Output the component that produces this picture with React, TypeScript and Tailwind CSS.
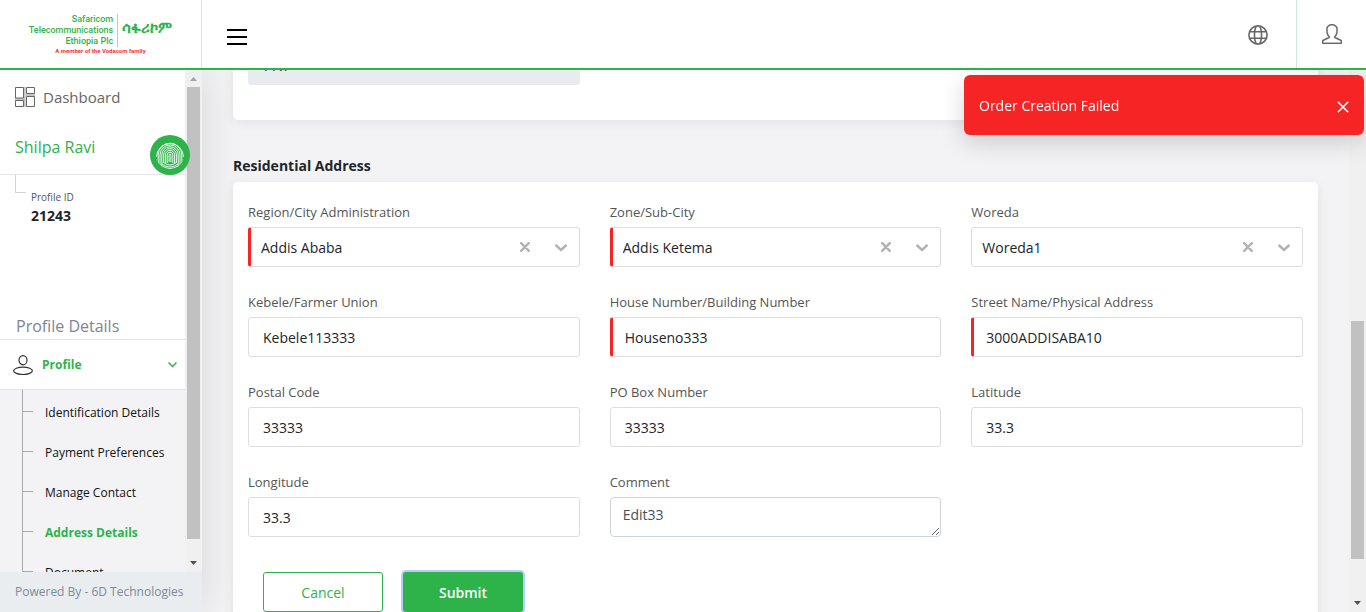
import { useState, type ReactNode } from "react";
import { SlUser } from "react-icons/sl";

const cx = (...parts: (string | false | undefined)[]) => parts.filter(Boolean).join(" ");

function Logo() {
  return (
    <a href="#home" className="flex flex-col items-center font-[Roboto,'Liberation_Sans',sans-serif] text-[#2db34a]">
      <span className="flex items-center gap-1">
        <span className="border-r border-[#a5dcb2] pr-1 text-right text-[9px] leading-[11px] font-medium">
          Safaricom
          <br />
          Telecommunications
          <br />
          Ethiopia Plc
        </span>
        <span className="pb-1 text-[15px] leading-4 font-bold">ሳፋሪኮም</span>
      </span>
      <span className="text-[6px] leading-[8px] font-bold text-[#f0323c]">A member of the Vodacom family</span>
    </a>
  );
}

function GlobeIcon() {
  return (
    <svg viewBox="0 0 20 20" className="size-5" fill="none" stroke="#666" strokeWidth="1.600">
      <circle cx="10" cy="10" r="9.1" />
      <path d="M8.500 1C5.800 5 5.800 15 8.500 19M11.500 1c2.700 4 2.700 14 0 18M1.500 6.800h17M1.500 13.200h17" />
    </svg>
  );
}

function DashboardIcon() {
  return (
    <svg viewBox="0 0 20 20" className="size-5" fill="none" stroke="#666">
      <path d="M9.500 0v20M11 8h9M0 12.200h10" stroke="#c4c4c4" strokeWidth="2.500" />
      <path d="M.5 .5h8v10.500h-8zM11.500 .5h8v6h-8zM.5 13.500h8v6h-8zM11.500 9.500h8v10h-8z" fill="#fff" />
    </svg>
  );
}

function PersonIcon() {
  return (
    <svg viewBox="0 0 20 20" className="size-5" fill="none" stroke="#333" strokeWidth="1.200">
      <ellipse cx="10" cy="5.200" rx="4" ry="4.600" />
      <ellipse cx="10" cy="15.800" rx="9.400" ry="3.700" />
    </svg>
  );
}

function Fingerprint() {
  return (
    <svg viewBox="0 0 40 40" className="size-10" fill="none" stroke="#fff" strokeWidth="0.9">
      <circle cx="20" cy="20" r="20" fill="#2db34a" stroke="none" />
      <clipPath id="print">
        <circle cx="20" cy="20" r="14" />
      </clipPath>
      <g clipPath="url(#print)">
        <path d="M6.500 22a13.500 13.500 0 0 1 27 0M8.200 29V20a11.800 11.800 0 0 1 23.600 0v9M10 32V20a10 10 0 0 1 20 0v12M11.800 33V20a8.200 8.200 0 0 1 16.400 0v13M13.600 27V20a6.400 6.400 0 0 1 12.800 0v7M15.400 28v-8a4.600 4.600 0 0 1 9.200 0v8M17.200 28v-8a2.800 2.800 0 0 1 5.600 0v8M19.100 27v-7a.9.9 0 0 1 1.800 0v7" />
        <path d="M13 27q7 6 14 0M12 29q8 6 16 0M12 31q8 5 16 0M6 24q1 4 3 6M34 24q-1 4-3 6" />
      </g>
    </svg>
  );
}

function Scrollbar({ thumb, up, className }: { thumb: string; up?: boolean; className?: string }) {
  return (
    <div aria-hidden="true" className={cx("flex w-[17px] shrink-0 flex-col items-center bg-[#f0f0f0]", className)}>
      {up && (
        <svg viewBox="0 0 17 17" className="size-[17px]" fill="#a3a3a3">
          <path d="M5 11h7L8.500 7z" />
        </svg>
      )}
      <div className={cx("w-[13px] bg-[#c1c1c1]", thumb)} />
      <svg viewBox="0 0 17 17" className="mt-auto size-[17px]" fill="#505050">
        <path d="M5 6h7l-3.500 4z" />
      </svg>
    </div>
  );
}

const menu = ["Identification Details", "Payment Preferences", "Manage Contact", "Address Details", "Document"];

function Sidebar() {
  return (
    <aside className="relative z-10 flex w-[202px] shrink-0 flex-col bg-white shadow-[0_0_40px_rgba(0,0,0,0.12)]">
      <div className="flex min-h-0 flex-1">
        <div className="flex min-w-0 flex-1 flex-col overflow-y-clip">
          <a href="#dashboard" className="flex h-[54px] shrink-0 items-center gap-2 pl-[15px] text-[15px] text-[#666]">
            <DashboardIcon />
            Dashboard
          </a>
          <div className="relative flex h-[51px] shrink-0 items-start border-b border-[#e4e4e8] pt-[11px] pl-[15px]">
            <span className="text-base leading-6 text-[#2db34a]">Shilpa Ravi</span>
            <button aria-label="Fingerprint status" className="absolute top-[11px] left-[150px] z-10">
              <Fingerprint />
            </button>
          </div>
          <div className="flex h-[140px] shrink-0 pl-[15px]">
            <span className="h-[18px] w-[11px] border-b border-l border-[#d4d4d8]" />
            <dl className="pt-[15px] pl-[5px]">
              <dt className="text-[10px] leading-[15px] text-[#555]">Profile ID</dt>
              <dd className="text-sm leading-[22px] font-bold text-[#212529]">21243</dd>
            </dl>
          </div>
          <h2 className="flex h-[25px] shrink-0 items-center border-b border-[#e4e4e8] pb-[2px] pl-4 text-base text-[#808495]">
            Profile Details
          </h2>
          <button className="flex h-[50px] shrink-0 items-center gap-[9px] border-b border-[#e4e4e8] px-[13px] pr-2 text-xs font-bold text-[#2db34a]">
            <PersonIcon />
            Profile
            <svg viewBox="0 0 9 6" className="ml-auto h-[6px] w-[9px]" fill="none" stroke="currentColor" strokeWidth="1.500">
              <path d="M.5 .5l4 4 4-4" />
            </svg>
          </button>
          <nav className="flex-1 bg-[#f3f3f6] pl-[22px]">
            <ul className="border-l border-[#aaa]">
              {menu.map((item) => (
                <li key={item} className="flex h-10 items-start">
                  <span className="h-[22px] w-[10px] border-b border-[#aaa]" />
                  <a
                    href={"#" + item.toLowerCase().replace(" ", "-")}
                    className={cx("pt-[3px] pl-3 text-xs leading-10", item === "Address Details" ? "font-bold text-[#2db34a]" : "text-[#111]")}
                  >
                    {item}
                  </a>
                </li>
              ))}
            </ul>
          </nav>
        </div>
        <Scrollbar up thumb="h-[90%] max-h-[452px]" />
      </div>
      <footer className="relative z-20 flex h-10 shrink-0 items-center bg-[#e9edf0] pl-[15px] text-xs text-[#7d8b9a]">
        Powered By - 6D Technologies
      </footer>
    </aside>
  );
}

type FieldProps = { id: string; label: string; value: string; required?: boolean };

const boxStyle = "h-10 w-full rounded-[3px] border border-[#dedede] bg-white pt-px text-sm text-[#212529] outline-none";

function Field({ id, label, children }: { id: string; label: string; children: ReactNode }) {
  return (
    <div className="flex flex-col">
      <label htmlFor={id} className="h-[25px] text-[13px] leading-5 text-[#555]">
        {label}
      </label>
      {children}
    </div>
  );
}

function TextField({ id, label, value, required }: FieldProps) {
  return (
    <Field id={id} label={label}>
      <input id={id} defaultValue={value} className={cx(boxStyle, required ? "border-l-3 border-l-[#f62424] pl-3" : "pl-[14px]")} />
    </Field>
  );
}

function SelectField({ id, label, value, required }: FieldProps) {
  const [current, setCurrent] = useState(value);
  return (
    <Field id={id} label={label}>
      <div className="relative">
        <select
          id={id}
          value={current}
          onChange={(e) => setCurrent(e.target.value)}
          className={cx(boxStyle, "appearance-none pl-[10px]", required && "border-l-3 border-l-[#f62424]")}
        >
          <option value="" />
          <option>{value}</option>
        </select>
        <button type="button" aria-label={"Clear " + label} onClick={() => setCurrent("")} className="absolute top-[15px] right-[50px]">
          <svg viewBox="0 0 10 10" className="size-[10px]" stroke="#b3b3b3" strokeWidth="2.500" strokeLinecap="round">
            <path d="M1.200 1.200l7.600 7.600M8.800 1.200L1.200 8.800" />
          </svg>
        </button>
        <svg viewBox="0 0 12 8" className="pointer-events-none absolute top-[17px] right-[13px] h-2 w-3" fill="none" stroke="#b3b3b3" strokeWidth="2.400" strokeLinecap="round" strokeLinejoin="round">
          <path d="M1.200 1.500L6 6l4.800-4.500" />
        </svg>
      </div>
    </Field>
  );
}

const cardShadow = "shadow-[0_2px_12px_rgba(0,0,0,0.07)]";

export default function App() {
  const [toast, setToast] = useState(true);
  return (
    <div className="flex h-screen flex-col overflow-hidden bg-[#f3f3f6] font-['Open_Sans','Noto_Sans',sans-serif]">
      <header className="relative z-20 flex h-[70px] shrink-0 items-stretch border-b-2 border-[#2db34a] bg-white">
        <div className="flex w-[202px] items-center justify-center border-r border-[#cdeed6]">
          <Logo />
        </div>
        <button aria-label="Toggle menu" className="ml-[25px] flex w-5 flex-col justify-center gap-[5px] pt-[5px]">
          <span className="h-[2px] w-full bg-black" />
          <span className="h-[2px] w-full bg-black" />
          <span className="h-[2px] w-full bg-black" />
        </button>
        <button aria-label="Language" className="ml-auto flex w-[77px] items-center justify-center border-r border-[#cdeed6] pt-[2px]">
          <GlobeIcon />
        </button>
        <button aria-label="Account" className="flex w-[69px] items-center justify-center text-[#666]">
          <SlUser className="size-5 stroke-current stroke-[16]" />
        </button>
      </header>

      <div className="flex min-h-0 flex-1">
        <Sidebar />
        <main className="min-w-0 flex-1 overflow-hidden px-[31px]">
          <section className={cx("-mt-[25px] rounded-[5px] bg-white px-[15px] pb-[35px]", cardShadow)}>
            <div className="grid grid-cols-3 gap-x-[30px]">
              <input
                aria-label="Permanent longitude"
                disabled
                defaultValue="77.7"
                className="h-10 w-full rounded-[3px] border border-[#e9ecef] bg-[#e9ecef] pl-[14px] text-sm text-[#212529]"
              />
            </div>
          </section>

          <h3 className="pt-[35px] pb-[6px] text-sm leading-[21px] font-bold text-[#212529]">Residential Address</h3>
          <form onSubmit={(e) => e.preventDefault()} className={cx("rounded-[5px] bg-white px-[15px] pt-5 pb-10", cardShadow)}>
            <div className="grid grid-cols-3 gap-x-[30px] gap-y-[25px]">
              <SelectField id="region" label="Region/City Administration" value="Addis Ababa" required />
              <SelectField id="zone" label="Zone/Sub-City" value="Addis Ketema" required />
              <SelectField id="woreda" label="Woreda" value="Woreda1" />
              <TextField id="kebele" label="Kebele/Farmer Union" value="Kebele113333" />
              <TextField id="house" label="House Number/Building Number" value="Houseno333" required />
              <TextField id="street" label="Street Name/Physical Address" value="3000ADDISABA10" required />
              <TextField id="postal" label="Postal Code" value="33333" />
              <TextField id="pobox" label="PO Box Number" value="33333" />
              <TextField id="latitude" label="Latitude" value="33.3" />
              <TextField id="longitude" label="Longitude" value="33.3" />
              <Field id="comment" label="Comment">
                <textarea
                  id="comment"
                  defaultValue="Edit33"
                  className="h-10 w-full resize overflow-hidden rounded-[4px] border border-[#ced4da] py-[6px] pl-3 text-sm leading-[21px] text-[#495057] outline-none"
                />
              </Field>
            </div>
            <div className="flex gap-5 px-[15px] pt-[35px]">
              <button type="button" className="h-10 w-[120px] rounded-[3px] border border-[#2db34a] bg-white pt-[2px] text-sm text-[#2db34a]">
                Cancel
              </button>
              <button type="submit" className="h-10 w-[120px] rounded-[3px] bg-[#2db34a] pt-[2px] text-sm font-semibold text-white ring-2 ring-[#b8cdf8]">
                Submit
              </button>
            </div>
          </form>
        </main>
        <Scrollbar className="pt-[251px]" thumb="h-[238px]" />
      </div>

      {toast && (
        <div role="alert" className="fixed top-[75px] right-[2px] z-30 flex h-[60px] w-[400px] items-center justify-between rounded-[6px] bg-[#f62424] px-[15px] pt-[2px] text-sm font-medium text-white shadow-[0_8px_24px_rgba(0,0,0,0.16)]">
          Order Creation Failed
          <button aria-label="Dismiss" onClick={() => setToast(false)} className="pt-[2px]">
            <svg viewBox="0 0 12 12" className="size-3" stroke="currentColor" strokeWidth="1.600">
              <path d="M.8 .8l10.400 10.400M11.200 .8L.8 11.200" />
            </svg>
          </button>
        </div>
      )}
    </div>
  );
}
